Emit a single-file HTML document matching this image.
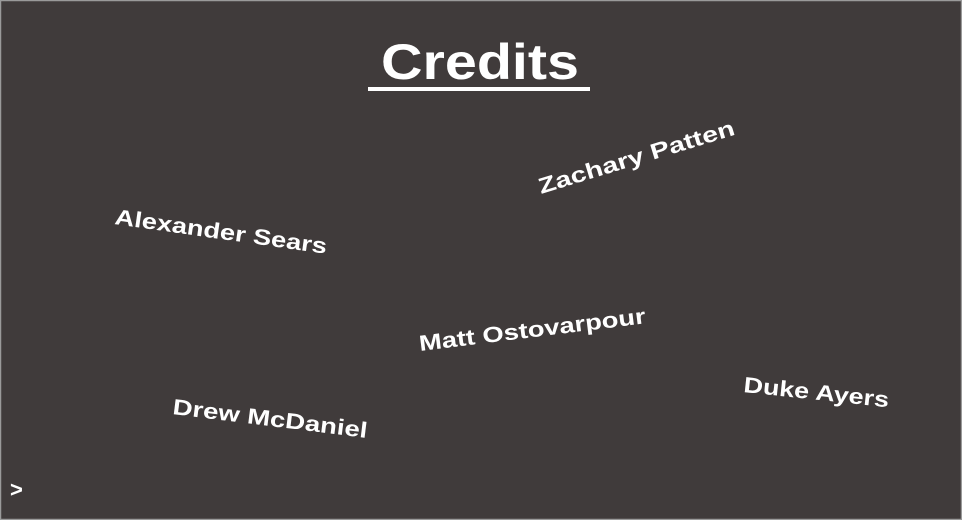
<!DOCTYPE html>
<html><head><meta charset="utf-8"><style>
html,body{margin:0;padding:0;background:#403b3b;}
svg{display:block}
</style></head><body>
<svg width="962" height="520" viewBox="0 0 962 520" xmlns="http://www.w3.org/2000/svg">
<rect x="0.5" y="0.5" width="961" height="519" fill="#403b3b" stroke="#9a9a9a" stroke-width="1.5"/>
<g font-family="Liberation Sans, sans-serif" font-weight="bold" fill="#ffffff">
<text x="381" y="79" font-size="50" textLength="198" lengthAdjust="spacingAndGlyphs">Credits</text>
<rect x="368" y="87" width="222" height="4" fill="#fff"/>
<text transform="translate(541,194) rotate(-17)" font-size="22" textLength="204" lengthAdjust="spacingAndGlyphs">Zachary Patten</text>
<text transform="translate(114,224) rotate(8)" font-size="22" textLength="214" lengthAdjust="spacingAndGlyphs">Alexander Sears</text>
<text transform="translate(420,351) rotate(-7)" font-size="22" textLength="228" lengthAdjust="spacingAndGlyphs">Matt Ostovarpour</text>
<text transform="translate(172,414) rotate(7)" font-size="22" textLength="196" lengthAdjust="spacingAndGlyphs">Drew McDaniel</text>
<text transform="translate(743,392) rotate(6)" font-size="22" textLength="146" lengthAdjust="spacingAndGlyphs">Duke Ayers</text>
<text x="10" y="497" font-size="22">&gt;</text>
</g>
</svg>
</body></html>
